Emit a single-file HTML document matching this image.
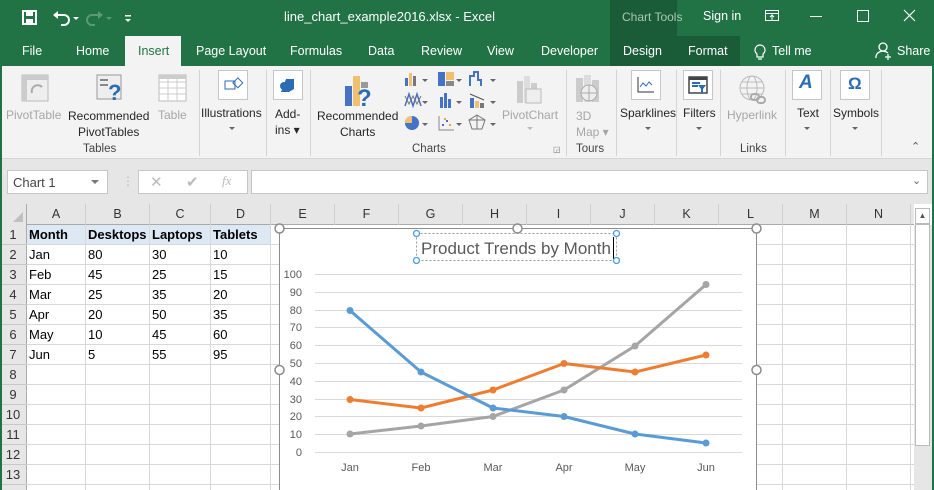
<!DOCTYPE html>
<html><head><meta charset="utf-8"><style>
*{margin:0;padding:0;box-sizing:border-box}
body{width:934px;height:490px;overflow:hidden;position:relative;background:#fff;font-family:"Liberation Sans",sans-serif;}
.a{position:absolute;white-space:nowrap}
.t{color:#fff;font-size:12.5px}
.rl{font-size:12px;color:#262626;text-align:center}
.dis{color:#a6a6a6}
.gl{font-size:11.5px;color:#444;text-align:center}
.div{position:absolute;top:70px;width:1px;height:86px;background:#d4d4d4}
.box{position:absolute;background:#fff;border:1px solid #c6c6c6;width:30px;height:30px;top:70px}
.arr{position:absolute;width:0;height:0;border-left:3px solid transparent;border-right:3px solid transparent;border-top:3px solid #666}
.ch{position:absolute;top:204px;height:21px;font-size:12.5px;color:#333;text-align:center;line-height:21px;border-right:1px solid #d0d0d0}
.rh{position:absolute;left:0;width:26px;height:20px;font-size:13px;color:#333;text-align:center;line-height:20px}
.c{position:absolute;font-size:13px;color:#000;line-height:20px}
</style></head><body>
<!-- title bar -->
<div class="a" style="left:0;top:0;width:934px;height:66px;background:#217346"></div>
<div class="a" style="left:610px;top:0;width:67px;height:36px;background:#1a5c38"></div>
<div class="a" style="left:610px;top:36px;width:130px;height:30px;background:#1a5c38"></div>
<!-- QAT -->
<svg class="a" style="left:20px;top:8px" width="115" height="20">
<rect x="3" y="3" width="13" height="13" fill="none" stroke="#fff" stroke-width="2"/><rect x="6" y="3" width="7" height="5" fill="#fff"/><rect x="6" y="11" width="7" height="5" fill="#fff"/>
<path d="M36 7 h8 a5 5 0 0 1 0 10 h-3" fill="none" stroke="#fff" stroke-width="2"/><path d="M33 7 l5 -4 v8z" fill="#fff"/>
<path d="M53 9 l3 3 3-3z" fill="#fff"/>
<path d="M80 7 h-8 a5 5 0 0 0 0 10 h3" fill="none" stroke="#5a9a72" stroke-width="2"/><path d="M83 7 l-5 -4 v8z" fill="#5a9a72"/>
<path d="M86 9l3 3 3-3z" fill="#5a9a72"/>
<rect x="105" y="7" width="6" height="1.5" fill="#fff"/><path d="M105 11 l3 3 3-3z" fill="#fff"/>
</svg>
<div class="a t" style="left:284px;top:9px;font-size:13px">line_chart_example2016.xlsx - Excel</div>
<div class="a" style="left:622px;top:10px;font-size:12px;color:#a9c9b5">Chart Tools</div>
<div class="a t" style="left:703px;top:9px">Sign in</div>
<svg class="a" style="left:0;top:0" width="934" height="34"><rect x="765.5" y="10.5" width="13" height="10" fill="none" stroke="#fff"/><path d="M765 13.5h14M772 20V15M770 17l2-2 2 2" stroke="#fff" fill="none"/><path d="M810 16.5h12" stroke="#fff"/><rect x="857.5" y="10.5" width="11" height="11" fill="none" stroke="#fff"/><path d="M904 10l11 11M915 10l-11 11" stroke="#fff" stroke-width="1.2"/></svg>
<!-- tabs -->
<div class="a" style="left:125px;top:36px;width:56px;height:31px;background:#f3f3f3"></div>
<div class="a t" style="left:22px;top:44px">File</div>
<div class="a t" style="left:76px;top:44px">Home</div>
<div class="a" style="left:138px;top:44px;font-size:12.5px;color:#217346">Insert</div>
<div class="a t" style="left:196px;top:44px">Page Layout</div>
<div class="a t" style="left:290px;top:44px">Formulas</div>
<div class="a t" style="left:368px;top:44px">Data</div>
<div class="a t" style="left:421px;top:44px">Review</div>
<div class="a t" style="left:487px;top:44px">View</div>
<div class="a t" style="left:541px;top:44px">Developer</div>
<div class="a t" style="left:623px;top:44px">Design</div>
<div class="a t" style="left:688px;top:44px">Format</div>
<svg class="a" style="left:752px;top:40px" width="150" height="22"><path d="M5 14 a5 5 0 1 1 6 0 v3 h-6z M6 19h4" fill="none" stroke="#fff" stroke-width="1.2"/><circle cx="131" cy="7" r="4" fill="none" stroke="#fff" stroke-width="1.3"/><path d="M124 18 a7 6 0 0 1 12 -5 M136 14v6M133 17h6" fill="none" stroke="#fff" stroke-width="1.3"/></svg>
<div class="a t" style="left:772px;top:44px">Tell me</div>
<div class="a t" style="left:897px;top:44px">Share</div>
<!-- ribbon -->
<div class="a" style="left:0;top:66px;width:934px;height:93px;background:#f3f3f3;border-bottom:1px solid #d6d6d6"></div>
<div class="a" style="left:0;top:159px;width:934px;height:45px;background:#e6e6e6"></div>
<div class="div" style="left:199px"></div><div class="div" style="left:266px"></div><div class="div" style="left:310px"></div><div class="div" style="left:566px"></div><div class="div" style="left:616px"></div><div class="div" style="left:676px"></div><div class="div" style="left:720px"></div><div class="div" style="left:785px"></div><div class="div" style="left:830px"></div><div class="div" style="left:881px"></div>
<!-- tables icons -->
<svg class="a" style="left:20px;top:73px" width="180" height="30">
<rect x="2" y="2" width="26" height="26" fill="#eee" stroke="#bbb"/><rect x="2" y="2" width="26" height="5" fill="#ccc"/><rect x="2" y="2" width="5" height="26" fill="#ccc"/><path d="M12 20 a6 6 0 0 1 10 -6" fill="none" stroke="#aaa" stroke-width="2"/>
<rect x="77" y="2" width="24" height="24" fill="#eee" stroke="#999"/><rect x="80" y="6" width="8" height="2" fill="#888"/><rect x="80" y="11" width="8" height="2" fill="#888"/><text x="88" y="27" font-size="22" font-weight="bold" fill="#2b6cb5" font-family="Liberation Sans">?</text>
<rect x="139" y="2" width="27" height="26" fill="#fff" stroke="#bbb"/><path d="M139 9h27M139 15h27M139 21h27M148 2v26M157 2v26" stroke="#ccc"/><rect x="139" y="2" width="27" height="4" fill="#ccc"/>
</svg>
<div class="a rl dis" style="left:6px;top:108px">PivotTable</div>
<div class="a rl" style="left:68px;top:108px;line-height:16px">Recommended<br>PivotTables</div>
<div class="a rl dis" style="left:158px;top:108px">Table</div>
<div class="a gl" style="left:83px;top:143px">Tables</div>
<div class="box" style="left:218px"></div><svg class="a" style="left:222px;top:74px" width="22" height="22"><rect x="3" y="7" width="10" height="8" fill="none" stroke="#2b6cb5"/><rect x="10" y="4" width="7" height="7" fill="none" stroke="#2b6cb5" transform="rotate(45 13 11)"/></svg>
<div class="a rl" style="left:201px;top:106px">Illustrations</div><div class="arr" style="left:229px;top:127px"></div>
<div class="box" style="left:273px"></div><svg class="a" style="left:277px;top:74px" width="22" height="22"><path d="M9 5 l8 0 l0 10 l-5 3 l-8 0z" fill="#2b6cb5"/><circle cx="7" cy="12" r="4" fill="#2b6cb5"/></svg>
<div class="a rl" style="left:275px;top:106px;line-height:16px;text-align:left">Add-<br>ins ▾</div>
<svg class="a" style="left:344px;top:74px" width="32" height="32"><rect x="1" y="12" width="7" height="20" fill="#4472c4"/><rect x="9" y="2" width="7" height="30" fill="#f0c070"/><rect x="17" y="8" width="7" height="6" fill="#999"/><text x="13" y="32" font-size="24" font-weight="bold" fill="#2b6cb5" font-family="Liberation Sans">?</text></svg>
<div class="a rl" style="left:317px;top:108px;line-height:16px">Recommended<br>Charts</div>
<svg class="a" style="left:404px;top:70px" width="95" height="68">
<g><rect x="1" y="8" width="3" height="8" fill="#4472c4"/><rect x="5" y="3" width="3" height="13" fill="#f0c070"/><rect x="9" y="6" width="3" height="10" fill="#777"/><path d="M18 9l3 3 3-3z" fill="#666"/></g>
<g><rect x="34" y="2" width="7" height="14" fill="#4472c4"/><rect x="42" y="2" width="8" height="8" fill="#f0c070"/><rect x="42" y="11" width="8" height="5" fill="#888"/><path d="M52 9l3 3 3-3z" fill="#666"/></g>
<g><path d="M66 16v-10h4v-4h4v8h3v6" fill="none" stroke="#4472c4" stroke-width="2"/><path d="M86 9l3 3 3-3z" fill="#666"/></g>
<g transform="translate(0,22)"><path d="M1 14 l4-12 4 12 4-12 4 12" fill="none" stroke="#4472c4" stroke-width="1.5"/><path d="M1 4 l4 8 4-8 4 8 4-8" fill="none" stroke="#777"/><path d="M18 9l3 3 3-3z" fill="#666"/>
<rect x="36" y="5" width="3" height="11" fill="#4472c4"/><rect x="40" y="1" width="3" height="15" fill="#4472c4"/><rect x="44" y="7" width="3" height="9" fill="#4472c4"/><path d="M52 9l3 3 3-3z" fill="#666"/>
<rect x="66" y="6" width="4" height="10" fill="#4472c4"/><rect x="71" y="9" width="4" height="7" fill="#f0c070"/><rect x="76" y="11" width="4" height="5" fill="#777"/><path d="M66 2l14 6" stroke="#555"/><path d="M86 9l3 3 3-3z" fill="#666"/></g>
<g transform="translate(0,44)"><circle cx="8" cy="9" r="7" fill="#4472c4"/><path d="M8 9V2A7 7 0 0 0 1 9z" fill="#f0c070"/><path d="M18 9l3 3 3-3z" fill="#666"/>
<path d="M35 2v14h15" fill="none" stroke="#888"/><g fill="#4472c4"><rect x="38" y="10" width="2" height="2"/><rect x="42" y="6" width="2" height="2"/></g><g fill="#f0a040"><rect x="45" y="10" width="2" height="2"/><rect x="40" y="4" width="2" height="2"/></g><path d="M52 9l3 3 3-3z" fill="#666"/>
<path d="M73 1l8 5-3 9h-10l-3-9z M73 1v14 M65 6l16 0" fill="none" stroke="#777"/><path d="M86 9l3 3 3-3z" fill="#666"/></g>
</svg>
<svg class="a" style="left:514px;top:75px" width="30" height="30"><rect x="3" y="6" width="6" height="22" fill="#ccc"/><rect x="10" y="1" width="6" height="27" fill="#ddd"/><rect x="17" y="8" width="6" height="6" fill="#ccc"/><rect x="12" y="14" width="15" height="14" fill="#eee" stroke="#bbb"/></svg>
<div class="a rl dis" style="left:502px;top:108px">PivotChart</div><div class="arr" style="left:527px;top:127px;border-top-color:#bbb"></div>
<div class="a gl" style="left:412px;top:143px">Charts</div>
<svg class="a" style="left:574px;top:75px" width="32" height="30"><rect x="2" y="3" width="7" height="24" fill="#ccc"/><rect x="10" y="0" width="7" height="27" fill="#ddd"/><rect x="18" y="5" width="7" height="22" fill="#ccc"/><circle cx="15" cy="18" r="8" fill="#eee" stroke="#aaa"/><path d="M7 18h16M15 10v16" stroke="#aaa"/></svg>
<div class="a rl dis" style="left:576px;top:108px;line-height:16px;text-align:left">3D<br>Map ▾</div>
<div class="a gl" style="left:576px;top:143px">Tours</div>
<div class="box" style="left:631px"></div><svg class="a" style="left:635px;top:74px" width="22" height="22"><path d="M3 3v15h16" stroke="#333" fill="none"/><path d="M5 13l3-4 3 3 3-4 3 3" stroke="#2b6cb5" fill="none"/></svg>
<div class="a rl" style="left:620px;top:106px">Sparklines</div><div class="arr" style="left:645px;top:127px"></div>
<div class="box" style="left:683px"></div><svg class="a" style="left:687px;top:74px" width="22" height="22"><rect x="2" y="3" width="18" height="16" fill="none" stroke="#444" stroke-width="1.5"/><rect x="2" y="3" width="18" height="3" fill="#444"/><path d="M5 9h8M5 12h6" stroke="#2b6cb5" stroke-width="2"/><path d="M11 11h8l-3 4v4h-2v-4z" fill="#2b6cb5"/></svg>
<div class="a rl" style="left:683px;top:106px">Filters</div><div class="arr" style="left:696px;top:127px"></div>
<svg class="a" style="left:737px;top:74px" width="32" height="32"><circle cx="15" cy="14" r="12" fill="none" stroke="#bbb"/><ellipse cx="15" cy="14" rx="5" ry="12" fill="none" stroke="#bbb"/><path d="M3 14h24M5 8h20M5 20h20" stroke="#bbb"/><rect x="14" y="20" width="8" height="6" rx="3" fill="none" stroke="#aaa" stroke-width="2"/><rect x="20" y="23" width="8" height="6" rx="3" fill="none" stroke="#aaa" stroke-width="2"/></svg>
<div class="a rl dis" style="left:727px;top:108px">Hyperlink</div>
<div class="a gl" style="left:740px;top:143px">Links</div>
<div class="box" style="left:792px"></div><div class="a" style="left:799px;top:72px;font-size:19px;font-style:italic;font-weight:bold;color:#2b6cb5">A</div>
<div class="a rl" style="left:797px;top:106px">Text</div><div class="arr" style="left:804px;top:127px"></div>
<div class="box" style="left:840px"></div><div class="a" style="left:848px;top:74px;font-size:17px;font-weight:bold;color:#2b6cb5">Ω</div>
<div class="a rl" style="left:833px;top:106px">Symbols</div><div class="arr" style="left:852px;top:127px"></div>
<div class="a" style="left:911px;top:140px;font-size:11px;color:#555">⌃</div>
<div class="a" style="left:553px;top:145px;font-size:8px;color:#777">◲</div>
<!-- formula bar -->
<div class="a" style="left:7px;top:170px;width:101px;height:24px;background:#fff;border:1px solid #c6c6c6"></div>
<div class="a" style="left:13px;top:175px;font-size:13px;color:#444">Chart 1</div>
<div class="a" style="left:91px;top:180px;border-left:4px solid transparent;border-right:4px solid transparent;border-top:4px solid #777;width:0"></div>
<div class="a" style="left:122px;top:174px;font-size:12px;color:#bbb">⋮</div>
<div class="a" style="left:138px;top:170px;width:110px;height:24px;background:#fff;border:1px solid #c6c6c6"></div>
<div class="a" style="left:150px;top:173px;font-size:15px;color:#bbb">✕</div>
<div class="a" style="left:186px;top:173px;font-size:15px;color:#bbb">✔</div>
<div class="a" style="left:222px;top:173px;font-size:13px;font-style:italic;color:#bbb;font-family:'Liberation Serif',serif">fx</div>
<div class="a" style="left:251px;top:170px;width:677px;height:24px;background:#fff;border:1px solid #c6c6c6"></div>
<div class="a" style="left:912px;top:174px;font-size:11px;color:#666">⌄</div>
<!-- grid -->
<div class="a" style="left:0;top:204px;width:914px;height:21px;background:#e6e6e6;border-bottom:1px solid #aaa"></div>
<div class="a" style="left:0;top:204px;width:27px;height:286px;background:#e6e6e6;border-right:1px solid #aaa"></div>
<svg class="a" style="left:12px;top:211px" width="12" height="12"><path d="M11 1v10H1z" fill="#c0c0c0"/></svg>
<div class="a" style="left:27px;top:225px;width:243px;height:20px;background:#dde8f5"></div>
<svg class="a" style="left:0;top:0" width="934" height="490">
<g stroke="#d8d8d8" stroke-width="1">
<path d="M85.5 225V490M149.5 225V490M210.5 225V490M270.5 225V490M782.5 225V490M846.5 225V490M910.5 225V490"/>
<path d="M27 244.5H279M27 264.5H279M27 284.5H279M27 304.5H279M27 324.5H279M27 344.5H279M27 364.5H279M27 384.5H279M27 404.5H279M27 424.5H279M27 444.5H279M27 464.5H279M27 484.5H279"/>
<path d="M757 244.5H914M757 264.5H914M757 284.5H914M757 304.5H914M757 324.5H914M757 344.5H914M757 364.5H914M757 384.5H914M757 404.5H914M757 424.5H914M757 444.5H914M757 464.5H914M757 484.5H914"/>
</g>
<g stroke="#c8c8c8"><path d="M85.5 204v21M149.5 204v21M210.5 204v21M270.5 204v21M334.5 204v21M398.5 204v21M462.5 204v21M526.5 204v21M590.5 204v21M654.5 204v21M718.5 204v21M782.5 204v21M846.5 204v21M910.5 204v21"/></g>
<g stroke="#c8c8c8"><path d="M0 244.5h27M0 264.5h27M0 284.5h27M0 304.5h27M0 324.5h27M0 344.5h27M0 364.5h27M0 384.5h27M0 404.5h27M0 424.5h27M0 444.5h27M0 464.5h27M0 484.5h27"/></g>
</svg>
<div class="ch" style="left:27px;width:59px">A</div><div class="ch" style="left:86px;width:64px">B</div><div class="ch" style="left:150px;width:61px">C</div><div class="ch" style="left:211px;width:60px">D</div><div class="ch" style="left:271px;width:64px">E</div><div class="ch" style="left:335px;width:64px">F</div><div class="ch" style="left:399px;width:64px">G</div><div class="ch" style="left:463px;width:64px">H</div><div class="ch" style="left:527px;width:64px">I</div><div class="ch" style="left:591px;width:64px">J</div><div class="ch" style="left:655px;width:64px">K</div><div class="ch" style="left:719px;width:64px">L</div><div class="ch" style="left:783px;width:64px">M</div><div class="ch" style="left:847px;width:64px">N</div>
<div class="rh" style="top:225px">1</div><div class="rh" style="top:245px">2</div><div class="rh" style="top:265px">3</div><div class="rh" style="top:285px">4</div><div class="rh" style="top:305px">5</div><div class="rh" style="top:325px">6</div><div class="rh" style="top:345px">7</div><div class="rh" style="top:365px">8</div><div class="rh" style="top:385px">9</div><div class="rh" style="top:405px">10</div><div class="rh" style="top:425px">11</div><div class="rh" style="top:445px">12</div><div class="rh" style="top:465px">13</div>
<div class="c" style="left:29px;top:225px;font-weight:bold">Month</div><div class="c" style="left:88px;top:225px;font-weight:bold">Desktops</div><div class="c" style="left:152px;top:225px;font-weight:bold">Laptops</div><div class="c" style="left:213px;top:225px;font-weight:bold">Tablets</div>
<div class="c" style="left:29px;top:245px">Jan</div><div class="c" style="left:88px;top:245px">80</div><div class="c" style="left:152px;top:245px">30</div><div class="c" style="left:213px;top:245px">10</div>
<div class="c" style="left:29px;top:265px">Feb</div><div class="c" style="left:88px;top:265px">45</div><div class="c" style="left:152px;top:265px">25</div><div class="c" style="left:213px;top:265px">15</div>
<div class="c" style="left:29px;top:285px">Mar</div><div class="c" style="left:88px;top:285px">25</div><div class="c" style="left:152px;top:285px">35</div><div class="c" style="left:213px;top:285px">20</div>
<div class="c" style="left:29px;top:305px">Apr</div><div class="c" style="left:88px;top:305px">20</div><div class="c" style="left:152px;top:305px">50</div><div class="c" style="left:213px;top:305px">35</div>
<div class="c" style="left:29px;top:325px">May</div><div class="c" style="left:88px;top:325px">10</div><div class="c" style="left:152px;top:325px">45</div><div class="c" style="left:213px;top:325px">60</div>
<div class="c" style="left:29px;top:345px">Jun</div><div class="c" style="left:88px;top:345px">5</div><div class="c" style="left:152px;top:345px">55</div><div class="c" style="left:213px;top:345px">95</div>
<!-- scrollbar -->
<div class="a" style="left:914px;top:225px;width:18px;height:265px;background:#e6e6e6"></div>
<div class="a" style="left:915px;top:208px;width:15px;height:16px;background:#fff;border:1px solid #bbb;font-size:8px;color:#555;text-align:center;line-height:14px">▲</div>
<div class="a" style="left:915px;top:224px;width:15px;height:222px;background:#fff;border:1px solid #bbb"></div>
<div class="a" style="left:932px;top:0;width:2px;height:490px;background:#217346"></div>
<div class="a" style="left:0;top:66px;width:2px;height:424px;background:#217346"></div>
<!-- chart -->
<svg class="a" style="left:0;top:0" width="934" height="490" font-family="Liberation Sans">
<rect x="279.5" y="228.5" width="477" height="270" fill="#fff" stroke="#8c8c8c"/>
<g stroke="#d9d9d9"><path d="M315 274.5H742M315 292.5H742M315 310.5H742M315 327.5H742M315 345.5H742M315 363.5H742M315 381.5H742M315 399.5H742M315 416.5H742M315 434.5H742M315 452.5H742"/></g>
<g font-size="11" fill="#595959" text-anchor="end"><text x="302" y="278">100</text><text x="302" y="296">90</text><text x="302" y="314">80</text><text x="302" y="331">70</text><text x="302" y="349">60</text><text x="302" y="367">50</text><text x="302" y="385">40</text><text x="302" y="403">30</text><text x="302" y="420">20</text><text x="302" y="438">10</text><text x="302" y="456">0</text></g>
<g font-size="11" fill="#595959" text-anchor="middle"><text x="350" y="471">Jan</text><text x="421" y="471">Feb</text><text x="493" y="471">Mar</text><text x="564" y="471">Apr</text><text x="635" y="471">May</text><text x="706" y="471">Jun</text></g>
<g stroke-width="3" fill="none" stroke-linejoin="round">
<polyline stroke="#a5a5a5" points="350,434 421,426 493,416.5 564,390 635,346 706,284.5"/>
<polyline stroke="#ed7d31" points="350,399.5 421,408 493,390 564,363.5 635,372 706,355"/>
<polyline stroke="#5b9bd5" points="350,310.5 421,372 493,408 564,416.5 635,434 706,443"/>
</g>
<g fill="#a5a5a5"><circle cx="350" cy="434" r="3.5"/><circle cx="421" cy="426" r="3.5"/><circle cx="493" cy="416.5" r="3.5"/><circle cx="564" cy="390" r="3.5"/><circle cx="635" cy="346" r="3.5"/><circle cx="706" cy="284.5" r="3.5"/></g>
<g fill="#ed7d31"><circle cx="350" cy="399.5" r="3.5"/><circle cx="421" cy="408" r="3.5"/><circle cx="493" cy="390" r="3.5"/><circle cx="564" cy="363.5" r="3.5"/><circle cx="635" cy="372" r="3.5"/><circle cx="706" cy="355" r="3.5"/></g>
<g fill="#5b9bd5"><circle cx="350" cy="310.5" r="3.5"/><circle cx="421" cy="372" r="3.5"/><circle cx="493" cy="408" r="3.5"/><circle cx="564" cy="416.5" r="3.5"/><circle cx="635" cy="434" r="3.5"/><circle cx="706" cy="443" r="3.5"/></g>
<rect x="416.5" y="233.5" width="200" height="27" fill="none" stroke="#999" stroke-dasharray="2,2"/>
<text x="421" y="254" font-size="17" fill="#595959">Product Trends by Month</text>
<path d="M613.5 237v22" stroke="#000" stroke-width="1"/>
<g fill="#fff" stroke="#4a9ee6" stroke-width="1.3"><circle cx="416.5" cy="233.5" r="3"/><circle cx="416.5" cy="260.5" r="3"/><circle cx="616.5" cy="233.5" r="3"/><circle cx="616.5" cy="260.5" r="3"/></g>
<g fill="#fff" stroke="#8c8c8c" stroke-width="1.5"><circle cx="279.5" cy="228.5" r="4.5"/><circle cx="517.5" cy="228.5" r="4.5"/><circle cx="756.5" cy="228.5" r="4.5"/><circle cx="279.5" cy="370" r="4.5"/><circle cx="756.5" cy="370" r="4.5"/></g>
</svg>
</body></html>
